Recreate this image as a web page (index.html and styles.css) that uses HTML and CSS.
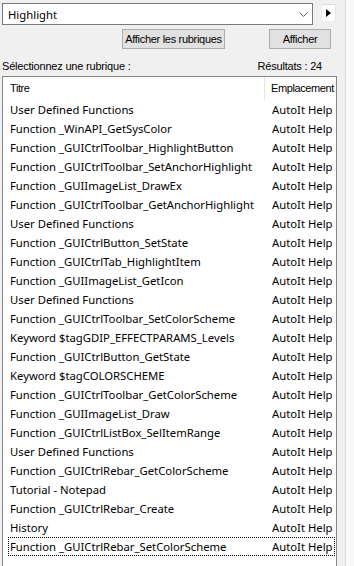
FILE: index.html
```html
<!DOCTYPE html>
<html lang="fr">
<head>
  <meta charset="UTF-8" />
  <meta name="viewport" content="width=device-width, initial-scale=1.0" />
  <title>Rechercher</title>
  <link rel="stylesheet" href="styles.css">
</head>
<body>
  <div class="panel">
    <div class="search-row">
      <div class="combo">
        <span class="combo-text">Highlight</span>
        <svg class="chevron" width="9" height="5" viewBox="0 0 9 5">
          <path d="M0.5 0.5 L4.5 4.5 L8.5 0.5" fill="none" stroke="#606060" stroke-width="1"/>
        </svg>
      </div>
      <div class="arrow-btn">
        <svg width="5" height="8" viewBox="0 0 5 8"><path d="M0 0 L5 4 L0 8 Z" fill="#000"/></svg>
      </div>
    </div>

    <div class="button-row">
      <button class="btn btn-topics">Afficher les rubriques</button>
      <button class="btn btn-show">Afficher</button>
    </div>

    <div class="label-row">
      <span>Sélectionnez une rubrique :</span>
      <span>Résultats : 24</span>
    </div>

    <div class="list">
      <div class="list-header">
        <div class="col-title">Titre</div>
        <div class="col-place">Emplacement</div>
      </div>
      <div class="rows">
        <div class="row"><span>User Defined Functions</span><span>AutoIt Help</span></div>
        <div class="row"><span>Function _WinAPI_GetSysColor</span><span>AutoIt Help</span></div>
        <div class="row"><span>Function _GUICtrlToolbar_HighlightButton</span><span>AutoIt Help</span></div>
        <div class="row"><span>Function _GUICtrlToolbar_SetAnchorHighlight</span><span>AutoIt Help</span></div>
        <div class="row"><span>Function _GUIImageList_DrawEx</span><span>AutoIt Help</span></div>
        <div class="row"><span>Function _GUICtrlToolbar_GetAnchorHighlight</span><span>AutoIt Help</span></div>
        <div class="row"><span>User Defined Functions</span><span>AutoIt Help</span></div>
        <div class="row"><span>Function _GUICtrlButton_SetState</span><span>AutoIt Help</span></div>
        <div class="row"><span>Function _GUICtrlTab_HighlightItem</span><span>AutoIt Help</span></div>
        <div class="row"><span>Function _GUIImageList_GetIcon</span><span>AutoIt Help</span></div>
        <div class="row"><span>User Defined Functions</span><span>AutoIt Help</span></div>
        <div class="row"><span>Function _GUICtrlToolbar_SetColorScheme</span><span>AutoIt Help</span></div>
        <div class="row"><span>Keyword $tagGDIP_EFFECTPARAMS_Levels</span><span>AutoIt Help</span></div>
        <div class="row"><span>Function _GUICtrlButton_GetState</span><span>AutoIt Help</span></div>
        <div class="row"><span>Keyword $tagCOLORSCHEME</span><span>AutoIt Help</span></div>
        <div class="row"><span>Function _GUICtrlToolbar_GetColorScheme</span><span>AutoIt Help</span></div>
        <div class="row"><span>Function _GUIImageList_Draw</span><span>AutoIt Help</span></div>
        <div class="row"><span>Function _GUICtrlListBox_SelItemRange</span><span>AutoIt Help</span></div>
        <div class="row"><span>User Defined Functions</span><span>AutoIt Help</span></div>
        <div class="row"><span>Function _GUICtrlRebar_GetColorScheme</span><span>AutoIt Help</span></div>
        <div class="row"><span>Tutorial - Notepad</span><span>AutoIt Help</span></div>
        <div class="row"><span>Function _GUICtrlRebar_Create</span><span>AutoIt Help</span></div>
        <div class="row"><span>History</span><span>AutoIt Help</span></div>
        <div class="row focused"><span>Function _GUICtrlRebar_SetColorScheme</span><span>AutoIt Help</span></div>
      </div>
    </div>
  </div>
  <div class="edge"></div>
</body>
</html>
```

FILE: styles.css
```css
* { box-sizing: border-box; }
body {
  margin: 0;
  display: flex;
  height: 100vh;
  overflow: hidden;
  background-color: #f0f0f0;
  color: #000;
  font-family: "Liberation Sans", Arial, sans-serif;
  font-size: 11px;
}
.panel {
  width: 345px;
  padding: 3px 0 0 2px;
}
.edge {
  flex: 1;
  border-left: 1px solid #dadada;
  background: #f9f9f9;
}
.search-row {
  display: flex;
  align-items: flex-start;
}
.combo {
  width: 311px;
  height: 22px;
  background: #fff;
  border: 1px solid #7a7a7a;
  display: flex;
  align-items: center;
  justify-content: space-between;
  padding: 0 4px 0 5px;
  font-family: "Noto Sans", sans-serif;
  font-size: 11.3px;
}
.chevron {
  margin-top: 1px;
}
.arrow-btn {
  width: 14px;
  height: 17px;
  margin: 1px 0 0 9px;
  background: #fff;
  border-top: 1px solid #dcdcdc;
  border-right: 1px solid #e6e6e6;
  display: flex;
  align-items: center;
  justify-content: center;
}
.button-row {
  display: flex;
  margin-top: 4px;
  height: 20px;
}
.btn {
  height: 20px;
  padding: 0;
  background: #e1e1e1;
  border: 1px solid #adadad;
  font-family: "Liberation Sans", Arial, sans-serif;
  font-size: 11px;
  letter-spacing: -0.3px;
  color: #000;
}
.btn-topics {
  width: 103px;
  margin-left: 120px;
}
.btn-show {
  width: 62px;
  margin-left: 44px;
}
.label-row {
  display: flex;
  justify-content: space-between;
  width: 320px;
  margin-top: 7px;
  height: 20px;
  line-height: 20px;
  letter-spacing: -0.2px;
}
.list {
  width: 335px;
  height: 500px;
  background: #fff;
  border: 1px solid #828790;
  overflow: hidden;
}
.list-header {
  display: flex;
  height: 23px;
  line-height: 23px;
  letter-spacing: -0.4px;
}
.col-title {
  flex: none;
  width: 262px;
  padding-left: 7px;
  border-right: 1px solid #e5e5e5;
}
.col-place {
  flex: 1;
  min-width: 0;
  padding-left: 6px;
  white-space: nowrap;
}
.row {
  display: grid;
  grid-template-columns: 262px minmax(0, 1fr);
  height: 19px;
  line-height: 19px;
  margin: 0 1px 0 5px;
  padding-left: 2px;
  font-family: "Noto Sans", sans-serif;
  font-size: 11.3px;
  white-space: nowrap;
}
.row span {
  overflow: hidden;
}
.row.focused {
  outline: 1px dotted #000;
  outline-offset: -1px;
}
```
